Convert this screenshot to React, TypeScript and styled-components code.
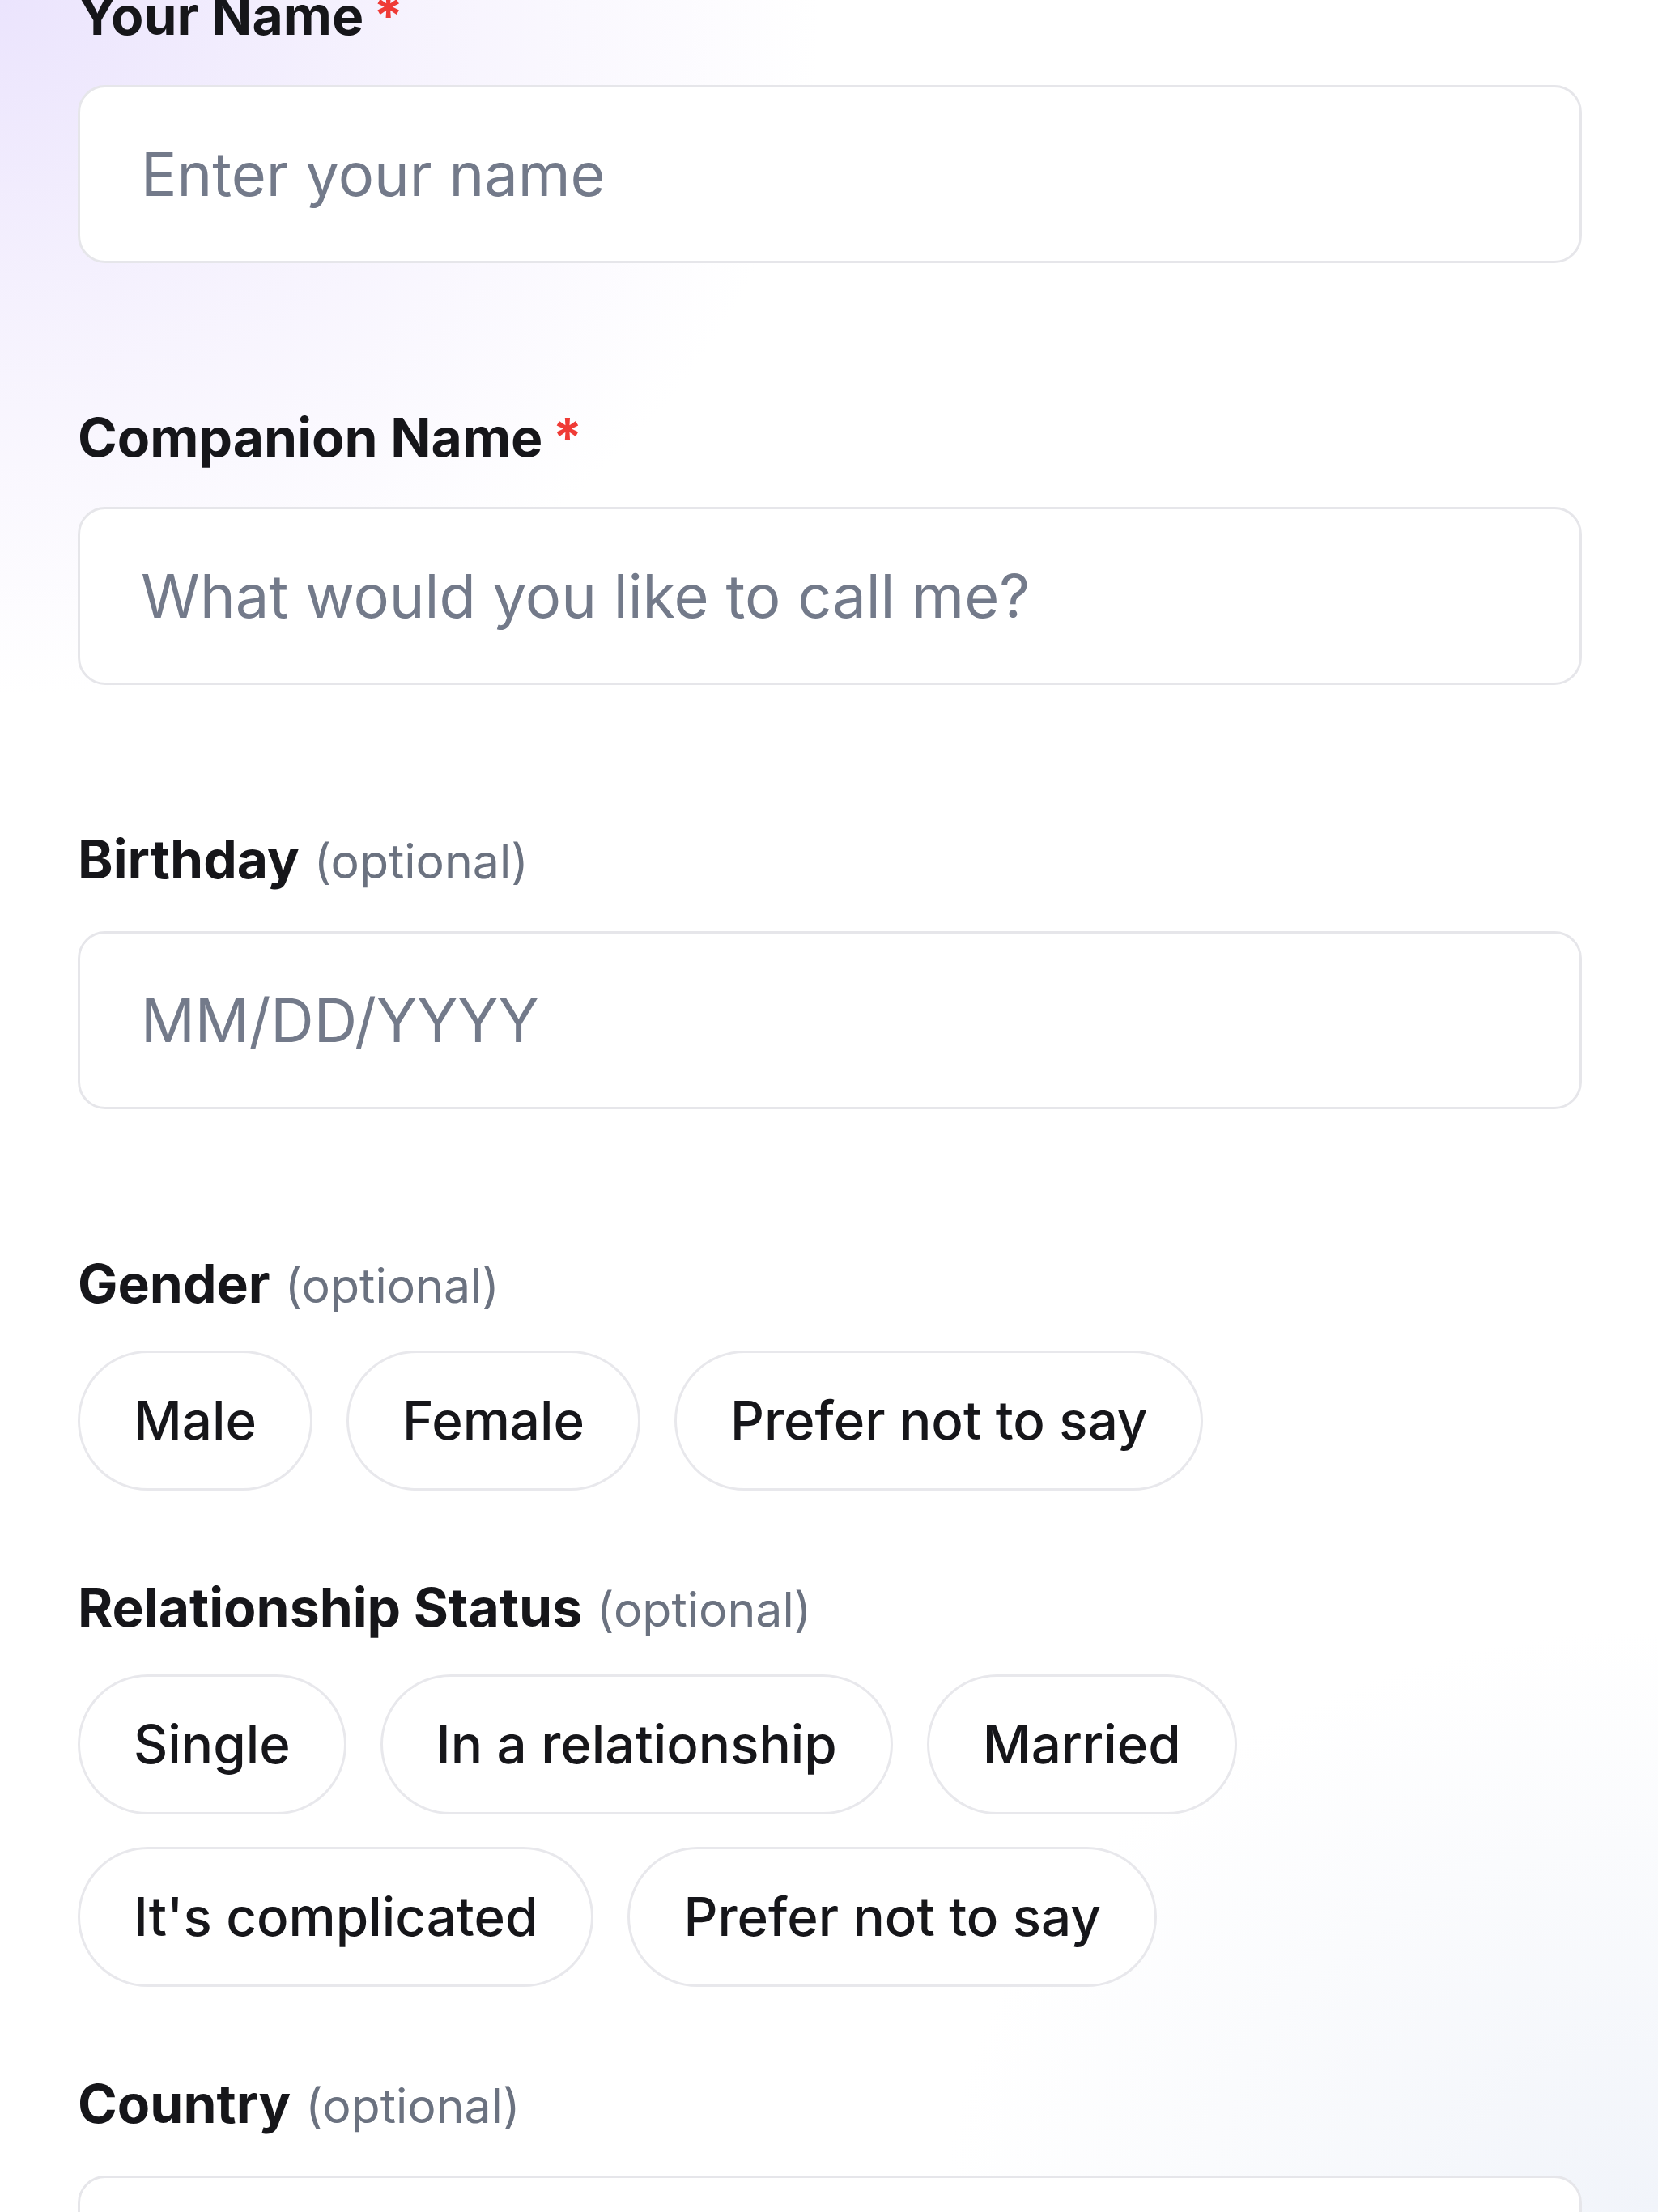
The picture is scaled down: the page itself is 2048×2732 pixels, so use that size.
import styled, { createGlobalStyle } from "styled-components";

const GlobalStyle = createGlobalStyle`
  html, body {
    margin: 0;
    padding: 0;
  }
  body {
    font-family: Inter, "Noto Sans", "Liberation Sans", sans-serif;
    color: #16161a;
    background: #ffffff;
  }
  * {
    box-sizing: border-box;
  }
`;

const genderOptions = ["Male", "Female", "Prefer not to say"];
const relationshipOptions = [
  "Single",
  "In a relationship",
  "Married",
  "It's complicated",
  "Prefer not to say",
];

const App = () => {
  return (
    <Page>
      <GlobalStyle />
      <Form>
        <Field $withHint>
          <Label>
            Your Name<Required>*</Required>
          </Label>
          <TextInput type="text" placeholder="Enter your name" />
        </Field>

        <Field $withHint>
          <Label>
            Companion Name<Required>*</Required>
          </Label>
          <TextInput type="text" placeholder="What would you like to call me?" />
        </Field>

        <Field $withHint>
          <Label>
            Birthday<Optional>(optional)</Optional>
          </Label>
          <TextInput type="text" placeholder="MM/DD/YYYY" />
        </Field>

        <Field $chips>
          <Label>
            Gender<Optional>(optional)</Optional>
          </Label>
          <ChipGroup>
            {genderOptions.map((option) => (
              <Chip key={option} type="button">
                {option}
              </Chip>
            ))}
          </ChipGroup>
        </Field>

        <Field $chips>
          <Label>
            Relationship Status<Optional>(optional)</Optional>
          </Label>
          <ChipGroup>
            {relationshipOptions.map((option) => (
              <Chip key={option} type="button">
                {option}
              </Chip>
            ))}
          </ChipGroup>
        </Field>

        <Field>
          <Label>
            Country<Optional>(optional)</Optional>
          </Label>
          <TextInput type="text" />
        </Field>
      </Form>
    </Page>
  );
};

export default App;

const Page = styled.div`
  height: 2732px;
  overflow: hidden;
  background:
    radial-gradient(ellipse 1300px 1100px at 0% 0%, #ebe4fd 0%, rgba(242, 237, 253, 0.65) 40%, rgba(255, 255, 255, 0) 78%),
    radial-gradient(ellipse 1100px 900px at 100% 100%, #f1f4fa 0%, rgba(245, 247, 251, 0.6) 45%, rgba(255, 255, 255, 0) 80%),
    #ffffff;
`;

const Form = styled.form`
  display: flex;
  flex-direction: column;
  gap: 105px;
  padding: 0 94px 0 96px;
  /* the view is scrolled: the first label is cut off at the top */
  margin-top: -20px;
`;

const Field = styled.div<{ $withHint?: boolean; $chips?: boolean }>`
  display: flex;
  flex-direction: column;
  gap: ${({ $chips }) => ($chips ? "41px" : "47px")};
  padding-bottom: ${({ $withHint }) => ($withHint ? "71px" : "0")};
`;

const Label = styled.label`
  display: block;
  font-size: 66px;
  line-height: 78px;
  font-weight: 700;
  color: #16161a;
`;

const Required = styled.span`
  margin-left: 12px;
  color: #ef3b36;
  font-weight: 700;
`;

const Optional = styled.span`
  margin-left: 18px;
  font-size: 59px;
  font-weight: 400;
  color: #6b7280;
`;

const TextInput = styled.input`
  display: block;
  width: 100%;
  height: 220px;
  padding: 0 75px;
  border: 3px solid #e6e6ea;
  border-radius: 34px;
  background: #ffffff;
  font-family: Inter, "Noto Sans", "Liberation Sans", sans-serif;
  font-size: 74px;
  color: #16161a;
  outline: none;

  &::placeholder {
    color: #737a8a;
    opacity: 1;
  }
`;

const ChipGroup = styled.div`
  display: flex;
  flex-wrap: wrap;
  column-gap: 42px;
  row-gap: 40px;
`;

const Chip = styled.button`
  display: inline-flex;
  align-items: center;
  justify-content: center;
  height: 173px;
  padding: 0 66px;
  border: 3px solid #e8e8ec;
  border-radius: 999px;
  background: #ffffff;
  font-family: Inter, "Noto Sans", "Liberation Sans", sans-serif;
  font-size: 65.5px;
  font-weight: 500;
  color: #16161a;
  cursor: pointer;
`;
